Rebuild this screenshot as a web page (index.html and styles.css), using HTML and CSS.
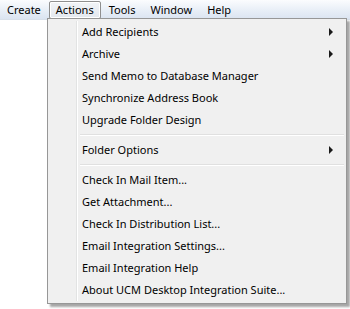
FILE: index.html
```html
<!DOCTYPE html>
<html lang="en">
<head>
    <meta charset="UTF-8">
    <title>Actions menu</title>
    <link rel="stylesheet" href="styles.css">
</head>
<body>
    <div class="menubar">
        <span class="top-item">Create</span>
        <span class="top-item open">Actions</span>
        <span class="top-item">Tools</span>
        <span class="top-item">Window</span>
        <span class="top-item">Help</span>
    </div>

    <div class="dropdown">
        <div class="item">Add Recipients<span class="arrow"></span></div>
        <div class="item">Archive<span class="arrow"></span></div>
        <div class="item">Send Memo to Database Manager</div>
        <div class="item">Synchronize Address Book</div>
        <div class="item">Upgrade Folder Design</div>
        <div class="sep"></div>
        <div class="item">Folder Options<span class="arrow"></span></div>
        <div class="sep"></div>
        <div class="item">Check In Mail Item...</div>
        <div class="item">Get Attachment...</div>
        <div class="item">Check In Distribution List...</div>
        <div class="item">Email Integration Settings...</div>
        <div class="item">Email Integration Help</div>
        <div class="item">About UCM Desktop Integration Suite...</div>
    </div>
</body>
</html>
```

FILE: styles.css
```css
body {
    margin: 0;
    background: #ffffff;
    font-family: 'Noto Sans', 'Open Sans', sans-serif;
    font-size: 11px;
    color: #000000;
    width: 350px;
    height: 309px;
    overflow: hidden;
}
.menubar {
    display: flex;
    height: 19px;
    align-items: center;
    background: linear-gradient(#fbfcfe, #e6edf6 60%, #dbe4f1);
    border-bottom: 1px solid #d8e0ea;
}
.top-item {
    padding: 0 6px;
    line-height: 16px;
    border: 1px solid transparent;
}
.top-item + .top-item {
    margin-left: 1px;
}
.top-item.open {
    border: 1px solid #8f8f8f;
    border-radius: 2px;
    background: linear-gradient(#f2f4f7, #e3e8ef);
    box-shadow: inset 0 0 0 1px #ffffff;
}
.dropdown {
    position: absolute;
    left: 47px;
    top: 18px;
    width: 294px;
    padding: 2px;
    background: #f0f0f0;
    border: 1px solid #979797;
    box-shadow: 3px 3px 2px rgba(0, 0, 0, 0.35);
}
.dropdown::before {
    content: '';
    position: absolute;
    left: 28px;
    top: 2px;
    bottom: 2px;
    width: 1px;
    background: #e2e3e3;
    border-right: 1px solid #ffffff;
}
.item {
    position: relative;
    height: 22px;
    line-height: 22px;
    padding-left: 32px;
}
.arrow {
    position: absolute;
    right: 11px;
    top: 7px;
    border-left: 4px solid #1a1a1a;
    border-top: 4px solid transparent;
    border-bottom: 4px solid transparent;
}
.sep {
    height: 1px;
    margin: 3px 0 3px 30px;
    background: #e0e0e0;
    border-bottom: 1px solid #ffffff;
}
```
